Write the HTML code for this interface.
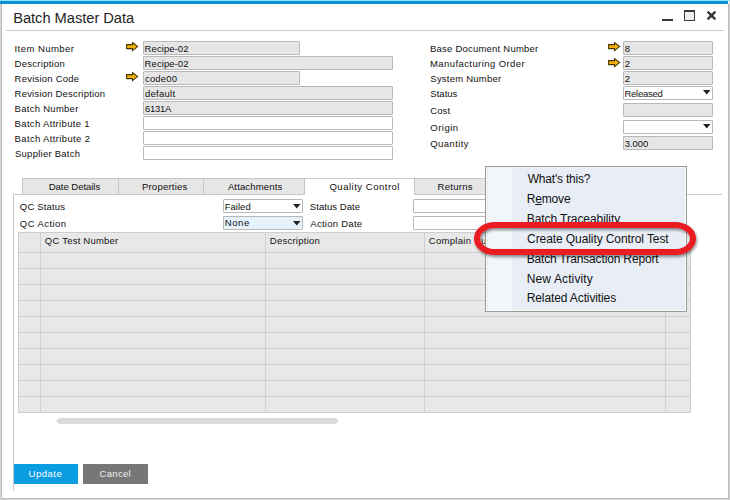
<!DOCTYPE html>
<html><head><meta charset="utf-8"><style>
html,body{margin:0;padding:0;width:730px;height:500px;overflow:hidden;background:#fff}
.b{position:absolute}
.t{position:absolute;font-family:"Liberation Sans", sans-serif;white-space:nowrap;line-height:normal;-webkit-text-stroke:0px currentColor}
</style></head><body>
<div class="b" style="left:0.00px;top:0.00px;width:730.00px;height:500.00px;background:#ffffff"></div>
<div class="b" style="left:0.00px;top:0.00px;width:730.00px;height:1.00px;background:#8fe3f6"></div>
<div class="b" style="left:0.00px;top:1.00px;width:728.00px;height:3.00px;background:#0b8fd3"></div>
<div class="b" style="left:0.00px;top:4.00px;width:1.00px;height:496.00px;background:#d8d8d8"></div>
<div class="b" style="left:1.00px;top:4.00px;width:1.00px;height:494.00px;background:#b9b9b9"></div>
<div class="b" style="left:728.00px;top:4.00px;width:1.00px;height:495.00px;background:#bbbbbb"></div>
<div class="b" style="left:729.00px;top:1.00px;width:1.00px;height:499.00px;background:#d4d4d4"></div>
<div class="b" style="left:1.00px;top:498.00px;width:728.00px;height:1.00px;background:#bbbbbb"></div>
<div class="b" style="left:0.00px;top:499.00px;width:730.00px;height:1.00px;background:#d4d4d4"></div>
<div class="t" style="left:13.19px;top:10.00px;font-size:14.7px;letter-spacing:-0.039px;color:#252525;-webkit-text-stroke:0">Batch Master Data</div>
<div class="b" style="left:6.00px;top:30.00px;width:718.00px;height:1.00px;background:#cdcdcd"></div>
<div class="b" style="left:662.00px;top:19.00px;width:11.00px;height:2.00px;background:#383838"></div>
<div class="b" style="left:684.00px;top:10.00px;width:11.00px;height:11.00px;background:#efefef;border:1px solid #383838;border-top-width:2px;box-sizing:border-box"></div>
<svg class="b" style="left:706px;top:10px" width="11" height="11" viewBox="0 0 11 11"><path d="M1.6 1.6 L9.4 9.4 M9.4 1.6 L1.6 9.4" stroke="#3a3a3a" stroke-width="2.3" stroke-linecap="butt"/><rect x="3.6" y="3.6" width="3.8" height="3.8" fill="#3a3a3a"/></svg>
<div class="t" style="left:14.52px;top:43.00px;font-size:9.5px;letter-spacing:0.453px;color:#111111;">Item Number</div>
<div class="t" style="left:14.62px;top:58.00px;font-size:9.5px;letter-spacing:0.268px;color:#111111;">Description</div>
<div class="t" style="left:14.62px;top:73.00px;font-size:9.5px;letter-spacing:0.227px;color:#111111;">Revision Code</div>
<div class="t" style="left:14.62px;top:88.00px;font-size:9.5px;letter-spacing:0.206px;color:#111111;">Revision Description</div>
<div class="t" style="left:14.62px;top:103.00px;font-size:9.5px;letter-spacing:0.274px;color:#111111;">Batch Number</div>
<div class="t" style="left:14.62px;top:118.00px;font-size:9.5px;letter-spacing:0.332px;color:#111111;">Batch Attribute 1</div>
<div class="t" style="left:14.62px;top:133.00px;font-size:9.5px;letter-spacing:0.351px;color:#111111;">Batch Attribute 2</div>
<div class="t" style="left:14.97px;top:148.00px;font-size:9.5px;letter-spacing:0.251px;color:#111111;">Supplier Batch</div>
<div class="b" style="left:143.00px;top:41.00px;width:157.00px;height:14.00px;background:#e6e6e6;border:1px solid #b9b9b9;border-radius:1px;box-sizing:border-box"></div>
<div class="t" style="left:144.62px;top:43.00px;font-size:9.5px;letter-spacing:0.069px;color:#111111;">Recipe-02</div>
<div class="b" style="left:143.00px;top:56.00px;width:250.00px;height:14.00px;background:#e6e6e6;border:1px solid #b9b9b9;border-radius:1px;box-sizing:border-box"></div>
<div class="t" style="left:144.62px;top:58.00px;font-size:9.5px;letter-spacing:0.069px;color:#111111;">Recipe-02</div>
<div class="b" style="left:143.00px;top:71.00px;width:157.00px;height:14.00px;background:#e6e6e6;border:1px solid #b9b9b9;border-radius:1px;box-sizing:border-box"></div>
<div class="t" style="left:145.00px;top:73.00px;font-size:9.5px;letter-spacing:0.161px;color:#111111;">code00</div>
<div class="b" style="left:143.00px;top:86.00px;width:250.00px;height:14.00px;background:#e6e6e6;border:1px solid #b9b9b9;border-radius:1px;box-sizing:border-box"></div>
<div class="t" style="left:145.00px;top:88.00px;font-size:9.5px;letter-spacing:0.258px;color:#111111;">default</div>
<div class="b" style="left:143.00px;top:101.00px;width:250.00px;height:14.00px;background:#e6e6e6;border:1px solid #b9b9b9;border-radius:1px;box-sizing:border-box"></div>
<div class="t" style="left:144.92px;top:103.00px;font-size:9.5px;letter-spacing:-0.242px;color:#111111;">6131A</div>
<div class="b" style="left:143.00px;top:116.00px;width:250.00px;height:14.00px;background:#ffffff;border:1px solid #b9b9b9;border-radius:1px;box-sizing:border-box"></div>
<div class="b" style="left:143.00px;top:131.00px;width:250.00px;height:14.00px;background:#ffffff;border:1px solid #b9b9b9;border-radius:1px;box-sizing:border-box"></div>
<div class="b" style="left:143.00px;top:146.00px;width:250.00px;height:14.00px;background:#ffffff;border:1px solid #b9b9b9;border-radius:1px;box-sizing:border-box"></div>
<svg class="b" style="left:125.80px;top:41.60px" width="13" height="10" viewBox="0 0 13 10"><path d="M0.6 2.6 H6.5 V0.6 L11.6 4.6 L6.5 8.6 V6.6 H0.6 Z" fill="#f1b10f" stroke="#4a3604" stroke-width="1.1" stroke-linejoin="miter"/></svg>
<svg class="b" style="left:125.80px;top:71.60px" width="13" height="10" viewBox="0 0 13 10"><path d="M0.6 2.6 H6.5 V0.6 L11.6 4.6 L6.5 8.6 V6.6 H0.6 Z" fill="#f1b10f" stroke="#4a3604" stroke-width="1.1" stroke-linejoin="miter"/></svg>
<div class="t" style="left:429.97px;top:43.00px;font-size:9.5px;letter-spacing:0.225px;color:#111111;">Base Document Number</div>
<div class="t" style="left:429.97px;top:58.00px;font-size:9.5px;letter-spacing:0.420px;color:#111111;">Manufacturing Order</div>
<div class="t" style="left:430.32px;top:73.00px;font-size:9.5px;letter-spacing:0.228px;color:#111111;">System Number</div>
<div class="t" style="left:430.32px;top:88.00px;font-size:9.5px;letter-spacing:0.019px;color:#111111;">Status</div>
<div class="t" style="left:430.27px;top:105.00px;font-size:9.5px;letter-spacing:0.090px;color:#111111;">Cost</div>
<div class="t" style="left:430.30px;top:122.00px;font-size:9.5px;letter-spacing:0.475px;color:#111111;">Origin</div>
<div class="t" style="left:430.30px;top:138.00px;font-size:9.5px;letter-spacing:0.420px;color:#111111;">Quantity</div>
<div class="b" style="left:623.00px;top:41.00px;width:90.00px;height:14.00px;background:#e6e6e6;border:1px solid #b9b9b9;border-radius:1px;box-sizing:border-box"></div>
<div class="t" style="left:624.79px;top:43.00px;font-size:9.5px;letter-spacing:0.000px;color:#111111;">8</div>
<div class="b" style="left:623.00px;top:56.00px;width:90.00px;height:14.00px;background:#e6e6e6;border:1px solid #b9b9b9;border-radius:1px;box-sizing:border-box"></div>
<div class="t" style="left:624.72px;top:58.00px;font-size:9.5px;letter-spacing:0.000px;color:#111111;">2</div>
<div class="b" style="left:623.00px;top:71.00px;width:90.00px;height:14.00px;background:#e6e6e6;border:1px solid #b9b9b9;border-radius:1px;box-sizing:border-box"></div>
<div class="t" style="left:624.72px;top:73.00px;font-size:9.5px;letter-spacing:0.000px;color:#111111;">2</div>
<div class="b" style="left:623.00px;top:86.00px;width:90.00px;height:14.00px;background:#ffffff;border:1px solid #b9b9b9;border-radius:1px;box-sizing:border-box"></div>
<div class="t" style="left:624.42px;top:88.00px;font-size:9.5px;letter-spacing:-0.235px;color:#111111;">Released</div>
<div class="b" style="left:623.00px;top:103.00px;width:90.00px;height:14.00px;background:#e6e6e6;border:1px solid #b9b9b9;border-radius:1px;box-sizing:border-box"></div>
<div class="b" style="left:623.00px;top:120.00px;width:90.00px;height:14.00px;background:#ffffff;border:1px solid #b9b9b9;border-radius:1px;box-sizing:border-box"></div>
<div class="b" style="left:623.00px;top:136.00px;width:90.00px;height:14.00px;background:#e6e6e6;border:1px solid #b9b9b9;border-radius:1px;box-sizing:border-box"></div>
<div class="t" style="left:624.84px;top:138.00px;font-size:9.5px;letter-spacing:-0.110px;color:#111111;">3.000</div>
<svg class="b" style="left:703.00px;top:90.00px" width="8" height="5" viewBox="0 0 8 5"><path d="M0 0 H7.5 L3.75 4.5 Z" fill="#222"/></svg>
<svg class="b" style="left:703.00px;top:124.00px" width="8" height="5" viewBox="0 0 8 5"><path d="M0 0 H7.5 L3.75 4.5 Z" fill="#222"/></svg>
<svg class="b" style="left:607.60px;top:42.40px" width="13" height="10" viewBox="0 0 13 10"><path d="M0.6 2.6 H6.5 V0.6 L11.6 4.6 L6.5 8.6 V6.6 H0.6 Z" fill="#f1b10f" stroke="#4a3604" stroke-width="1.1" stroke-linejoin="miter"/></svg>
<svg class="b" style="left:607.60px;top:57.50px" width="13" height="10" viewBox="0 0 13 10"><path d="M0.6 2.6 H6.5 V0.6 L11.6 4.6 L6.5 8.6 V6.6 H0.6 Z" fill="#f1b10f" stroke="#4a3604" stroke-width="1.1" stroke-linejoin="miter"/></svg>
<div class="b" style="left:13.00px;top:194.00px;width:709.00px;height:1.00px;background:#c6c6c6"></div>
<div class="b" style="left:22.00px;top:178.00px;width:97.00px;height:17.00px;background:#e6e6e6;border:1px solid #c6c6c6;box-sizing:border-box"></div>
<div class="t" style="left:48.71px;top:181.00px;font-size:9.6px;letter-spacing:-0.069px;color:#111111;">Date Details</div>
<div class="b" style="left:118.00px;top:178.00px;width:86.00px;height:17.00px;background:#e6e6e6;border:1px solid #c6c6c6;box-sizing:border-box"></div>
<div class="t" style="left:141.91px;top:181.00px;font-size:9.6px;letter-spacing:0.187px;color:#111111;">Properties</div>
<div class="b" style="left:203.00px;top:178.00px;width:102.00px;height:17.00px;background:#e6e6e6;border:1px solid #c6c6c6;box-sizing:border-box"></div>
<div class="t" style="left:227.88px;top:181.00px;font-size:9.6px;letter-spacing:0.101px;color:#111111;">Attachments</div>
<div class="b" style="left:304.00px;top:178.00px;width:111.00px;height:17.00px;background:#ffffff;border:1px solid #c6c6c6;border-bottom:none;box-sizing:border-box"></div>
<div class="t" style="left:329.45px;top:181.00px;font-size:9.6px;letter-spacing:0.472px;color:#111111;">Quality Control</div>
<div class="b" style="left:414.00px;top:178.00px;width:87.00px;height:17.00px;background:#e6e6e6;border:1px solid #c6c6c6;box-sizing:border-box"></div>
<div class="t" style="left:437.61px;top:181.00px;font-size:9.6px;letter-spacing:0.237px;color:#111111;">Returns</div>
<div class="b" style="left:13.00px;top:194.00px;width:1.00px;height:297.00px;background:#c6c6c6"></div>
<div class="t" style="left:19.85px;top:201.00px;font-size:9.5px;letter-spacing:0.171px;color:#111111;">QC Status</div>
<div class="t" style="left:19.85px;top:218.00px;font-size:9.5px;letter-spacing:0.434px;color:#111111;">QC Action</div>
<div class="b" style="left:223.00px;top:199.00px;width:80.00px;height:14.00px;background:#ffffff;border:1px solid #b9b9b9;border-radius:1px;box-sizing:border-box"></div>
<div class="b" style="left:223.00px;top:216.00px;width:80.00px;height:14.00px;background:#e5f1fb;border:1px solid #b9b9b9;border-radius:1px;box-sizing:border-box"></div>
<div class="t" style="left:224.72px;top:201.00px;font-size:9.5px;letter-spacing:0.023px;color:#111111;">Failed</div>
<div class="t" style="left:224.72px;top:217.00px;font-size:9.5px;letter-spacing:0.597px;color:#111111;">None</div>
<svg class="b" style="left:293.00px;top:204.00px" width="8" height="5" viewBox="0 0 8 5"><path d="M0 0 H7.5 L3.75 4.5 Z" fill="#222"/></svg>
<svg class="b" style="left:293.00px;top:221.00px" width="8" height="5" viewBox="0 0 8 5"><path d="M0 0 H7.5 L3.75 4.5 Z" fill="#222"/></svg>
<div class="t" style="left:309.87px;top:201.00px;font-size:9.5px;letter-spacing:0.052px;color:#111111;">Status Date</div>
<div class="t" style="left:310.28px;top:218.00px;font-size:9.5px;letter-spacing:0.273px;color:#111111;">Action Date</div>
<div class="b" style="left:413.00px;top:199.00px;width:107.00px;height:14.00px;background:#ffffff;border:1px solid #b9b9b9;border-radius:1px;box-sizing:border-box"></div>
<div class="b" style="left:413.00px;top:216.00px;width:107.00px;height:14.00px;background:#ffffff;border:1px solid #b9b9b9;border-radius:1px;box-sizing:border-box"></div>
<div class="b" style="left:18.00px;top:232.00px;width:673.00px;height:181.00px;background:#e8e8e8;border:1px solid #cecece;box-sizing:border-box"></div>
<div class="b" style="left:18.00px;top:252.00px;width:673.00px;height:1.00px;background:#d0d0d0"></div>
<div class="b" style="left:18.00px;top:268.00px;width:673.00px;height:1.00px;background:#d0d0d0"></div>
<div class="b" style="left:18.00px;top:284.00px;width:673.00px;height:1.00px;background:#d0d0d0"></div>
<div class="b" style="left:18.00px;top:300.00px;width:673.00px;height:1.00px;background:#d0d0d0"></div>
<div class="b" style="left:18.00px;top:316.00px;width:673.00px;height:1.00px;background:#d0d0d0"></div>
<div class="b" style="left:18.00px;top:332.00px;width:673.00px;height:1.00px;background:#d0d0d0"></div>
<div class="b" style="left:18.00px;top:348.00px;width:673.00px;height:1.00px;background:#d0d0d0"></div>
<div class="b" style="left:18.00px;top:364.00px;width:673.00px;height:1.00px;background:#d0d0d0"></div>
<div class="b" style="left:18.00px;top:380.00px;width:673.00px;height:1.00px;background:#d0d0d0"></div>
<div class="b" style="left:18.00px;top:396.00px;width:673.00px;height:1.00px;background:#d0d0d0"></div>
<div class="b" style="left:40.00px;top:232.00px;width:1.00px;height:181.00px;background:#d0d0d0"></div>
<div class="b" style="left:265.00px;top:232.00px;width:1.00px;height:181.00px;background:#d0d0d0"></div>
<div class="b" style="left:424.00px;top:232.00px;width:1.00px;height:181.00px;background:#d0d0d0"></div>
<div class="b" style="left:665.00px;top:232.00px;width:1.00px;height:181.00px;background:#d0d0d0"></div>
<div class="t" style="left:44.85px;top:235.00px;font-size:9.5px;letter-spacing:0.217px;color:#111111;">QC Test Number</div>
<div class="t" style="left:269.82px;top:235.00px;font-size:9.5px;letter-spacing:0.248px;color:#111111;">Description</div>
<div class="t" style="left:428.72px;top:235.00px;font-size:9.5px;letter-spacing:0.296px;color:#111111;">Complain</div>
<div class="t" style="left:480.98px;top:235.00px;font-size:9.5px;letter-spacing:0.000px;color:#111111;">u</div>
<svg class="b" style="left:0;top:0" width="730" height="500"><polygon points="56,421 59.5,418 336,418 338.5,421 336,424 59.5,424" fill="#dadada"/></svg>
<div class="b" style="left:14.00px;top:464.00px;width:64.00px;height:20.00px;background:#0a9de2"></div>
<div class="b" style="left:83.00px;top:464.00px;width:65.00px;height:20.00px;background:#777777"></div>
<div class="t" style="left:28.57px;top:468.00px;font-size:9.5px;letter-spacing:0.504px;color:#ffffff;-webkit-text-stroke:0">Update</div>
<div class="t" style="left:99.62px;top:468.00px;font-size:9.5px;letter-spacing:0.309px;color:#f0f0f0;-webkit-text-stroke:0">Cancel</div>
<div class="b" style="left:485.00px;top:166.00px;width:202.00px;height:146.00px;background:#e9eef6;border:1px solid #999999;box-sizing:border-box;box-shadow:inset 1px 1px 0 #f4f6fa, inset -1px -1px 0 #fbfcfd"></div>
<div class="b" style="left:488.00px;top:168.00px;width:24.00px;height:142.00px;background:#f2f6f9"></div>
<div class="t" style="left:527.65px;top:172.00px;font-size:12px;letter-spacing:-0.189px;color:#111111;-webkit-text-stroke:0">What's this?</div>
<div class="t" style="left:526.72px;top:192.00px;font-size:12px;letter-spacing:-0.173px;color:#111111;-webkit-text-stroke:0">R<u>e</u>move</div>
<div class="t" style="left:526.72px;top:212.00px;font-size:12px;letter-spacing:-0.074px;color:#111111;-webkit-text-stroke:0">Batch Traceability</div>
<div class="t" style="left:527.09px;top:232.00px;font-size:12px;letter-spacing:-0.088px;color:#111111;-webkit-text-stroke:0">Create Quality Control Test</div>
<div class="t" style="left:526.72px;top:252.00px;font-size:12px;letter-spacing:-0.152px;color:#111111;-webkit-text-stroke:0">Batch Transaction Report</div>
<div class="t" style="left:526.72px;top:272.00px;font-size:12px;letter-spacing:0.124px;color:#111111;-webkit-text-stroke:0">New Activity</div>
<div class="t" style="left:526.72px;top:291.00px;font-size:12px;letter-spacing:-0.113px;color:#111111;-webkit-text-stroke:0">Related Activities</div>
<svg class="b" style="left:468px;top:216px" width="240" height="48" viewBox="0 0 240 48"><defs><filter id="sh" x="-10%" y="-40%" width="120%" height="180%"><feGaussianBlur in="SourceAlpha" stdDeviation="1.5"/><feOffset dx="1" dy="2" result="o"/><feComponentTransfer><feFuncA type="linear" slope="0.45"/></feComponentTransfer><feMerge><feMergeNode/><feMergeNode in="SourceGraphic"/></feMerge></filter></defs><rect x="9" y="9" width="216" height="27" rx="18" ry="13.5" fill="none" stroke="#ea1a24" stroke-width="6" filter="url(#sh)"/></svg>
</body></html>
